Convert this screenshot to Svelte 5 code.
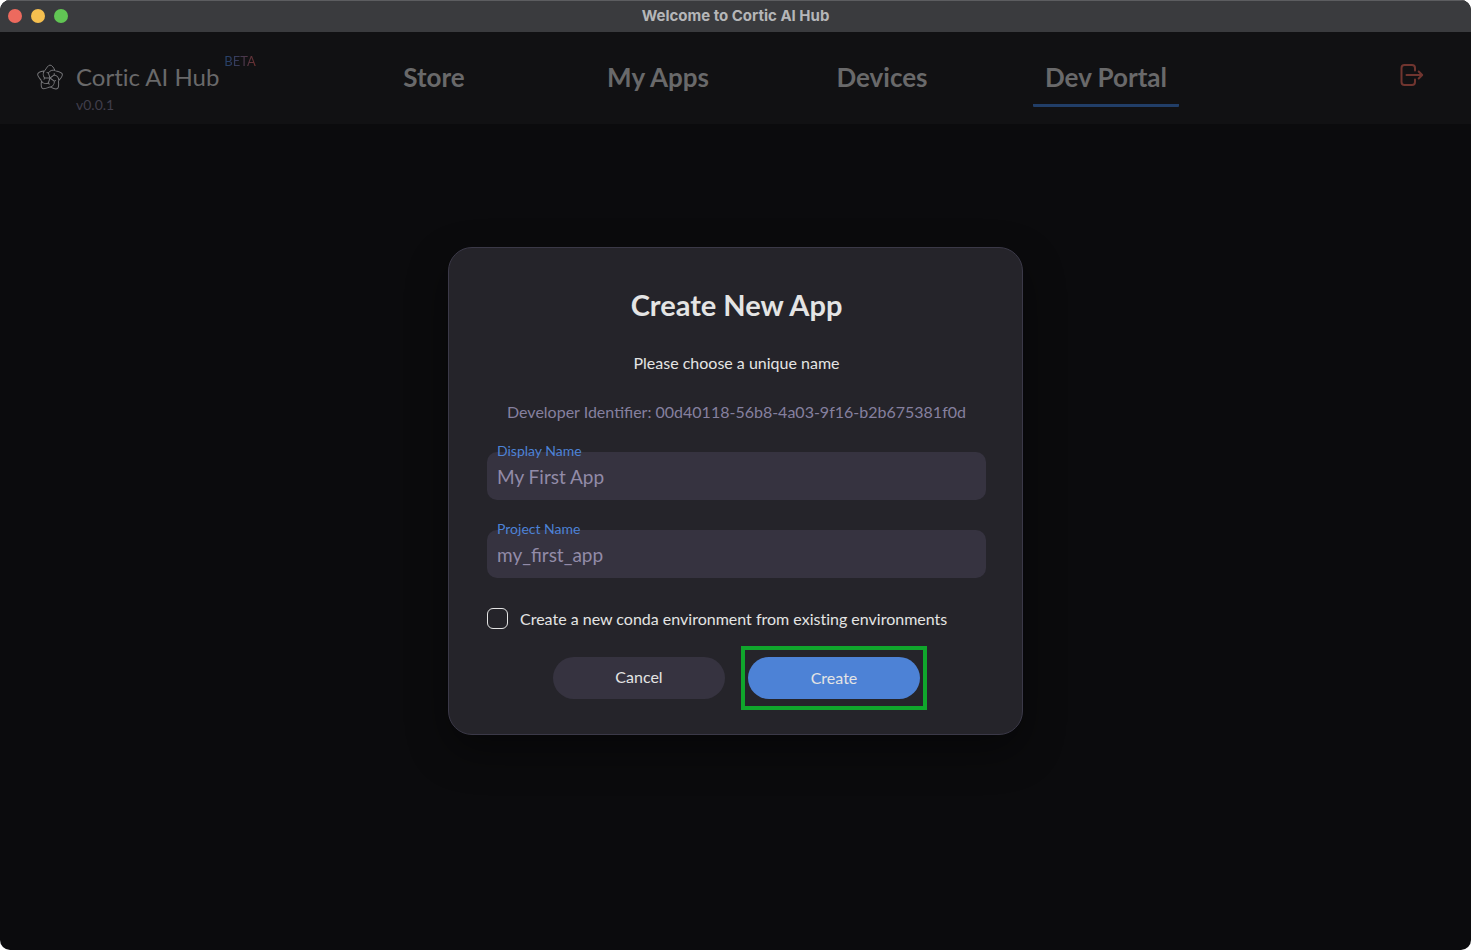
<script>
  const tabs = ['Store', 'My Apps', 'Devices', 'Dev Portal'];
  const petals = [0, 72, 144, 216, 288];
  let active = $state('Dev Portal');
  let displayName = $state('My First App');
  let projectName = $state('my_first_app');
  let fromExisting = $state(false);
</script>

<div class="window">
  <div class="titlebar">
    <div class="lights">
      <span class="light red"></span>
      <span class="light yellow"></span>
      <span class="light green"></span>
    </div>
    <span class="title">Welcome to Cortic AI Hub</span>
    <div></div>
  </div>

  <div class="content">
    <header>
      <div class="brand">
        <svg class="logo" viewBox="-14 -14 28 28" aria-hidden="true">
          {#each petals as angle}
            <path
              transform="rotate({angle})"
              d="M-5 -7.600C-3.600 -9.600 -2 -12.900 0 -12.900C2.400 -12.900 3.800 -9.800 5 -7.600C2.600 -8.400 -.4 -7.400 -1.600 -5L-3 -5.400M-1.600 -5L0 0"
            />
          {/each}
        </svg>
        <div class="names">
          <span class="name">Cortic AI Hub</span>
          <span class="version">v0.0.1</span>
        </div>
        <span class="beta">BETA</span>
      </div>
      <nav>
        {#each tabs as tab}
          <button class="tab" class:active={tab === active} onclick={() => (active = tab)}>{tab}</button>
        {/each}
      </nav>
      <div class="actions">
        <button class="logout" aria-label="Log out">
          <svg viewBox="0 0 24 24" aria-hidden="true">
            <path d="M15.500 7.500V5Q15.500 2 12.500 2H5Q2 2 2 5V19Q2 22 5 22H12.500Q15.500 22 15.500 19V16.500" />
            <path d="M7 12H22.500M19.200 8.500L22.700 12L19.200 15.500" />
          </svg>
        </button>
      </div>
    </header>

    <main>
      <form class="dialog" onsubmit={(e) => e.preventDefault()}>
        <h1>Create New App</h1>
        <p class="hint">Please choose a unique name</p>
        <p class="identifier">Developer Identifier: 00d40118-56b8-4a03-9f16-b2b675381f0d</p>

        <div class="field">
          <label for="display-name">Display Name</label>
          <input id="display-name" type="text" bind:value={displayName} />
        </div>
        <div class="field">
          <label for="project-name">Project Name</label>
          <input id="project-name" type="text" bind:value={projectName} />
        </div>

        <label class="check">
          <input type="checkbox" bind:checked={fromExisting} />
          Create a new conda environment from existing environments
        </label>

        <div class="buttons">
          <button type="button" class="pill cancel">Cancel</button>
          <div class="highlight">
            <button type="submit" class="pill create">Create</button>
          </div>
        </div>
      </form>
    </main>
  </div>
</div>

<style>
  :global(body) {
    margin: 0;
    background: #fff;
  }
  .window,
  .window * {
    box-sizing: border-box;
  }
  .window {
    min-height: 100vh;
    display: flex;
    flex-direction: column;
    overflow: hidden;
    border-radius: 10px;
    background: #0b0b0d;
    font-family: Lato, sans-serif;
  }
  button {
    font-family: inherit;
    border: 0;
    padding: 0;
    background: none;
    cursor: pointer;
  }
  .titlebar {
    height: 32px;
    display: grid;
    grid-template-columns: 1fr auto 1fr;
    align-items: center;
    padding: 0 8px 2px;
    background: #3a3b3e;
    border-top: 1px solid #5c5d60;
  }
  .lights {
    display: flex;
    gap: 9px;
  }
  .light {
    width: 14px;
    height: 14px;
    border-radius: 50%;
  }
  .red {
    background: #ed6a5e;
  }
  .yellow {
    background: #f5bf4f;
  }
  .green {
    background: #61c554;
  }
  .title {
    font: 700 15px/28px Inter, sans-serif;
    color: #b5b6b8;
  }
  .content {
    flex: 1;
    display: grid;
    grid-template: 92px 1fr / 1fr;
  }
  header {
    grid-area: 1 / 1;
    display: grid;
    grid-template-columns: 322fr 896fr 253fr;
    background: #111113;
  }
  .brand {
    display: flex;
    align-items: flex-start;
    padding: 31px 0 0 36px;
  }
  .logo {
    width: 28px;
    height: 28px;
    margin-top: 1px;
    fill: none;
    stroke: #77777a;
    stroke-width: 1;
    stroke-linejoin: round;
    stroke-linecap: round;
  }
  .names {
    display: flex;
    flex-direction: column;
    margin-left: 12px;
  }
  .name {
    font-size: 24px;
    line-height: 28px;
    color: #69696a;
    white-space: nowrap;
    font-variant-ligatures: none;
  }
  .version {
    font-size: 14px;
    line-height: 28px;
    color: #403e4b;
  }
  .beta {
    margin: -12px 0 0 5px;
    font-size: 13px;
    line-height: 20px;
    color: transparent;
    background: linear-gradient(90deg, #23436f, #3d3a55 50%, #70302e);
    background-clip: text;
  }
  nav {
    display: grid;
    grid-template-columns: repeat(4, 1fr);
    justify-items: center;
    align-items: start;
    padding-top: 16px;
  }
  .tab {
    width: 65%;
    height: 59px;
    padding-top: 3px;
    border-bottom: 3px solid transparent;
    border-radius: 1px;
    font-size: 26px;
    line-height: 53px;
    font-weight: 700;
    color: #69696a;
    white-space: nowrap;
  }
  .active {
    border-color: #213e68;
  }
  .actions {
    display: flex;
    justify-content: flex-end;
    align-items: flex-start;
    padding: 31px 47px 0 0;
  }
  .logout svg {
    display: block;
    width: 25px;
    height: 24px;
    fill: none;
    stroke: #70352f;
    stroke-width: 2;
    stroke-linecap: round;
    stroke-linejoin: round;
  }
  main {
    grid-area: 1 / 1 / 3 / 2;
    display: grid;
    place-items: center;
    pointer-events: none;
  }
  .dialog {
    pointer-events: auto;
    display: flex;
    flex-direction: column;
    width: 100%;
    max-width: 575px;
    padding: 39px 36px 24px 38px;
    border: 1px solid #3b3948;
    border-radius: 24px;
    background: #25242a;
    box-shadow: 0 16px 40px rgba(0, 0, 0, 0.4);
    color: #e4e4e4;
  }
  h1 {
    margin: 0;
    font-size: 29px;
    line-height: 36px;
    font-weight: 700;
    text-align: center;
  }
  p {
    margin: 0;
    font-size: 16px;
    line-height: 20px;
    text-align: center;
  }
  .hint {
    margin-top: 30px;
  }
  .identifier {
    margin-top: 29px;
    color: #85809f;
  }
  .field {
    position: relative;
    margin-top: 30px;
  }
  .field label {
    position: absolute;
    top: -11px;
    left: 10px;
    font-size: 14px;
    line-height: 20px;
    color: #4d82d6;
  }
  .field input {
    display: block;
    width: 100%;
    height: 48px;
    padding: 0 10px;
    border: 0;
    border-radius: 10px;
    outline: 0;
    background: #363340;
    color: #928ba8;
    font: 19px/24px Lato, sans-serif;
  }
  .check {
    display: flex;
    align-items: center;
    gap: 12px;
    margin-top: 30px;
    font-size: 16px;
    line-height: 21px;
    font-variant-ligatures: none;
  }
  .check input {
    appearance: none;
    width: 21px;
    height: 21px;
    margin: 0;
    border: 1px solid #e4e4e4;
    border-radius: 6px;
  }
  .check input:checked {
    background: #4d82d6;
  }
  .buttons {
    display: flex;
    justify-content: flex-end;
    align-items: center;
    gap: 16px;
    margin-top: 17px;
    padding-right: 59px;
  }
  .pill {
    display: block;
    width: 172px;
    height: 42px;
    border-radius: 21px;
    font-size: 16px;
    line-height: 20px;
    color: #e4e4e4;
  }
  .cancel {
    padding-bottom: 2px;
    background: #363340;
  }
  .create {
    background: #4d82d6;
  }
  .highlight {
    padding: 7px 3px;
    border: 4px solid #10a62c;
  }
</style>
